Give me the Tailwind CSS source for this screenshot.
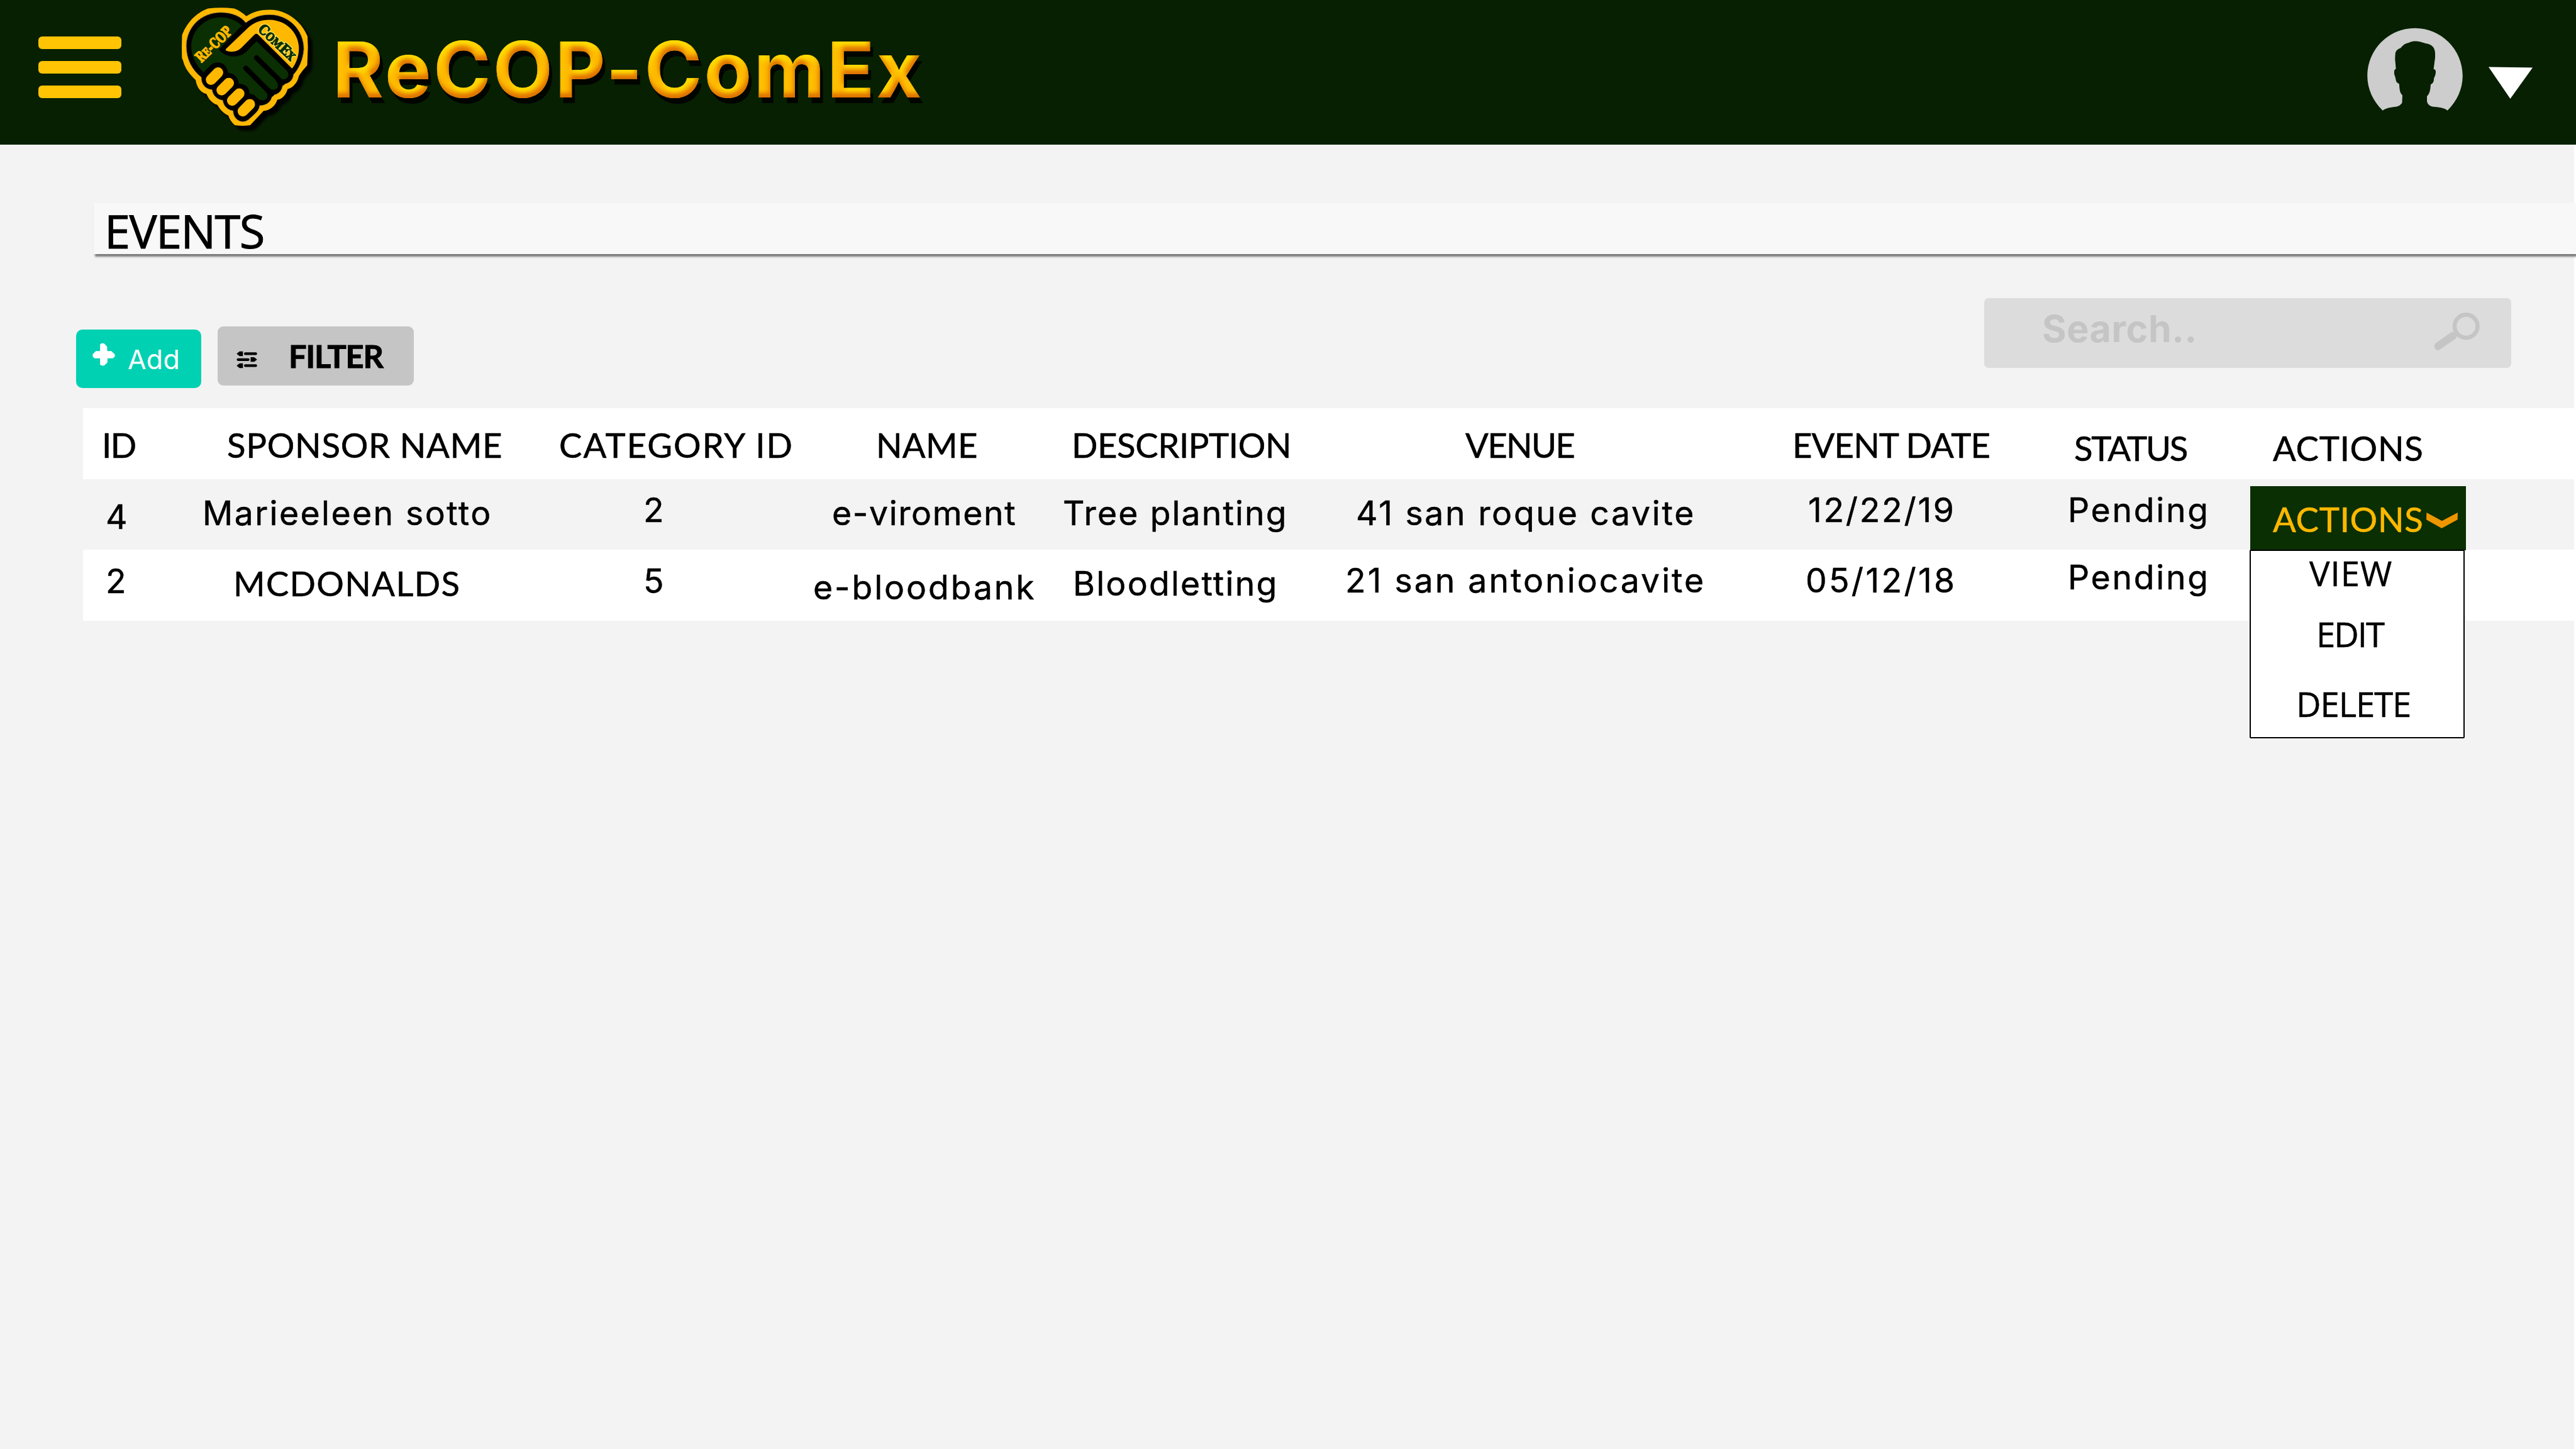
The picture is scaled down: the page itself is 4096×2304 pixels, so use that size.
<!DOCTYPE html>
<html lang="en">
<head>
<meta charset="utf-8">
<title>ReCOP-ComEx – Events</title>
<script src="https://cdn.jsdelivr.net/npm/@tailwindcss/browser@4"></script>
</head>
<body class="w-[4096px] h-[2304px] overflow-hidden bg-[#f3f3f3] text-black whitespace-nowrap">

<!-- bevel and hard shadow for the brand name -->
<svg class="absolute w-0 h-0" aria-hidden="true">
  <filter id="bevel" x="-5%" y="-20%" width="110%" height="150%" color-interpolation-filters="sRGB">
    <feComponentTransfer in="SourceAlpha" result="inv"><feFuncA type="linear" slope="-1" intercept="1"/></feComponentTransfer>
    <feGaussianBlur in="inv" stdDeviation="3.5" result="soft"/>
    <feOffset in="soft" dx="2" dy="8" result="hiOff"/>
    <feFlood flood-color="#ffdc00"/><feComposite in2="hiOff" operator="in"/><feComposite in2="SourceAlpha" operator="in" result="hi"/>
    <feOffset in="soft" dx="-2" dy="-7" result="loOff"/>
    <feFlood flood-color="#dd7000"/><feComposite in2="loOff" operator="in"/><feComposite in2="SourceAlpha" operator="in" result="lo"/>
    <feOffset in="SourceAlpha" dx="5" dy="9" result="shOff"/>
    <feFlood flood-color="#000500"/><feComposite in2="shOff" operator="in" result="sh"/>
    <feMerge><feMergeNode in="sh"/><feMergeNode in="SourceGraphic"/><feMergeNode in="hi"/><feMergeNode in="lo"/></feMerge>
  </filter>
</svg>

<header class="flex items-start h-[230px] w-full bg-[#072001]">
  <button class="flex flex-col gap-[19px] ml-[61px] mt-[58px] w-[132px]">
    <span class="h-5 rounded-md bg-[#ffc404]"></span>
    <span class="h-5 rounded-md bg-[#ffc404]"></span>
    <span class="h-5 rounded-md bg-[#ffc404]"></span>
  </button>

  <svg class="ml-[63px] w-[256px] h-[218px]" viewBox="0 0 1200 1020">
    <defs><filter id="ds" x="-10%" y="-10%" width="130%" height="130%"><feGaussianBlur stdDeviation="10"/></filter></defs>
    <path id="rim" transform="translate(34 36)" filter="url(#ds)" fill="#000" d="M350 62L545 62C580 75 610 95 636 120C690 85 745 72 810 72C850 72 890 80 925 96C1000 130 1060 190 1092 270L1095 350L1090 485C1070 510 1040 540 1027 568C1020 610 985 655 943 663C935 700 905 738 867 742C855 785 815 822 765 825L665 932Q610 942 550 932Q515 900 502 860C465 845 435 810 420 781C380 770 350 730 340 700C300 690 268 655 258 595C210 550 175 500 166 455L156 430L155 350L157 262C190 170 260 95 350 62Z"/>
    <path fill="#ffb800" d="M350 62Q450 52 545 62C580 75 610 95 636 120C690 85 745 72 810 72C850 72 890 80 925 96C1000 130 1060 190 1092 270L1095 350L1090 485C1070 510 1040 540 1027 568C1020 610 985 655 943 663C935 700 905 738 867 742C855 785 815 822 765 825L665 932Q610 942 550 932Q515 900 502 860C465 845 435 810 420 781C380 770 350 730 340 700C300 690 268 655 258 595C210 550 175 500 166 455L156 430L155 350L157 262C190 170 260 95 350 62Z"/>
    <path fill="#000" stroke="#a8883c" stroke-width="4" d="M445 92C530 92 595 120 632 168C690 125 745 108 810 108C950 108 1065 220 1065 365C1060 440 1030 510 988 555C985 595 955 625 908 628C905 670 880 705 830 708C825 750 795 785 735 787C735 820 700 850 650 893Q610 920 570 893C545 870 538 850 537 825C500 822 465 790 460 747C420 742 385 710 380 668C335 665 298 630 300 575C230 520 188 440 188 340C190 200 300 92 445 92Z"/>
    <path fill="#0a2f02" d="M445 128C505 128 560 150 602 190L432 368C480 432 585 438 640 380L712 306L935 523C965 555 945 590 912 590C900 590 890 584 880 574L855 600C890 640 865 668 835 668C822 668 812 662 800 652L775 676C810 710 790 747 757 747C735 747 720 735 700 712Q685 700 660 697C660 660 640 625 580 622C578 580 545 545 500 543C495 500 470 465 425 465C395 465 380 475 370 485L317 538C260 490 225 410 225 345C228 220 330 128 445 128Z"/>
    <path stroke="#000" stroke-width="38" stroke-linecap="round" d="M712 430L905 618M633 508L825 700"/>
    <path fill="#ffb800" d="M483 365L640 215C690 165 745 147 810 147C940 150 1028 250 1028 360C1028 420 1005 475 977 510L722 256Q710 246 696 258L605 350C570 390 515 390 483 375Z"/>
    <path stroke="#ffb800" stroke-width="78" stroke-linecap="round" d="M373 593L425 540M452 671L505 618M531 749L583 697M610 828L662 776"/>
    <text transform="translate(300 470) rotate(-44)" textLength="330" lengthAdjust="spacingAndGlyphs" class="font-['DejaVu_Serif',serif] font-bold text-[108px]" fill="#ffb800" stroke="#ffb800" stroke-width="7">R<tspan class="text-[86px]">E</tspan>-COP</text>
    <text transform="translate(716 224) rotate(43)" textLength="342" lengthAdjust="spacingAndGlyphs" class="font-['DejaVu_Serif',serif] font-bold text-[104px]" fill="none" stroke="#ffdf50" stroke-width="20">C<tspan class="text-[82px]">OM</tspan>E<tspan class="text-[82px]">X</tspan></text>
    <text transform="translate(716 224) rotate(43)" textLength="342" lengthAdjust="spacingAndGlyphs" class="font-['DejaVu_Serif',serif] font-bold text-[104px]" fill="#0a2f02" stroke="#0a2f02" stroke-width="6">C<tspan class="text-[82px]">OM</tspan>E<tspan class="text-[82px]">X</tspan></text>
  </svg>

  <h1 class="ml-[17px] mt-[36px] font-['Inter',sans-serif] font-bold text-[123px] leading-[150px] tracking-[3.84px] text-[#ffbb00] [filter:url(#bevel)]">ReCOP-ComEx</h1>

  <!-- avatar and account menu -->
  <svg class="ml-auto w-[152px] h-[153px] mt-[44px]" viewBox="209 208 622 717" preserveAspectRatio="none">
    <path fill="#cdcdcd" d="M310 825C247 757 210 665 210 567C210 371 349 211 520 211C691 211 830 371 830 567C830 665 793 757 731 825C712 808 690 804 662 800L632 796C610 788 600 772 598 756V718C612 704 620 680 622 632C640 620 643 606 643 585C652 566 655 552 655 535Q654 517 641 517L651 430V400C650 350 625 330 588 325C556 314 545 309 520 309C492 309 488 320 462 326C440 336 436 350 425 360C402 370 394 384 392 402L390 440L396 515C384 520 384 532 385 555C396 585 394 604 402 616L417 628C420 670 420 692 438 712L436 768C428 782 415 794 396 797C362 801 332 806 310 825Z"/>
  </svg>
  <svg class="ml-[41px] mt-[106px] mr-[69px] w-[70px] h-[51px]" viewBox="0 0 70 51"><path fill="#fff" d="M0 .5L70 1.5L34.5 51Z"/></svg>
</header>

<main class="h-[2074px] pt-[93px] border-r-[3px] border-white">
  <h2 class="ml-[149px] -mr-[3px] h-[81px] pl-[17px] pt-[3px] bg-[#f8f8f8] shadow-[2px_4px_3px_#777] font-['Open_Sans',sans-serif] text-[74px] leading-[82px] tracking-[-1.63px] [-webkit-text-stroke:1px_black]">EVENTS</h2>

  <div class="flex items-start h-[245px]">
    <button class="flex items-start ml-[121px] mt-[120px] w-[199px] h-[93px] rounded-[10px] bg-[#00d1b2] text-white">
      <svg class="ml-[26px] mt-[21px] w-[36px] h-[37px]" viewBox="146 160 172 172" preserveAspectRatio="none"><path fill="#fff" d="M204 172Q218 158 238 168L258 190V222H290L316 246V262L300 275H260V305L238 326Q220 334 204 322V275H162L148 262V245L172 222H204Z"/></svg>
      <span class="ml-[20px] mt-[22px] font-['Inter',sans-serif] text-[43px] leading-[50px] tracking-[0.2px]">Add</span>
    </button>
    <button class="flex items-start ml-[26px] mt-[115px] w-[312px] h-[94px] rounded-[9px] bg-[#c5c5c5]">
      <svg class="ml-[30px] mt-[39px] w-[33px] h-[28px]" viewBox="1224 216 157 134" preserveAspectRatio="none">
        <path fill="#000" d="M1225 237L1247 219H1273V255H1247ZM1225 328L1247 310H1273V347H1247ZM1380 282L1358 299H1331V264H1358Z"/>
        <path stroke="#000" stroke-width="20" stroke-linecap="round" d="M1291 237H1370M1236 282H1313M1291 328H1370"/>
      </svg>
      <span class="ml-[50px] mt-[17px] font-['Lato',sans-serif] font-bold text-[50.5px] leading-[60px] tracking-[-1.24px] [-webkit-text-stroke:1px_black]">FILTER</span>
    </button>
    <div class="flex items-start ml-auto mr-[100px] mt-[70px] w-[838px] h-[111px] rounded-[7px] bg-[#dcdcdc] text-[#c5c5c5]">
      <span class="ml-[92px] mt-[14px] font-['Inter',sans-serif] font-bold text-[59px] leading-[70px] tracking-[0.6px]">Search..</span>
      <svg class="ml-auto mr-[50px] mt-[23px] w-[73px] h-[61px]" viewBox="3873 497 73 61">
        <circle cx="3924.2" cy="518.7" r="18.3" fill="none" stroke="#c5c5c5" stroke-width="6.6"/>
        <path fill="#c5c5c5" d="M3900.5 528.2Q3902 527.4 3905 528L3910 533Q3909.500 537 3907 539L3883 555.500Q3879 558.500 3876 555.500Q3871.500 551 3875.500 546Z"/>
      </svg>
    </div>
  </div>

  <!-- events table -->
  <div class="ml-[132px] -mr-[3px]">
    <div class="grid grid-cols-[168px_560px_415px_405px_440px_680px_440px_320px_1fr] h-[113px] bg-white font-['Lato',sans-serif] text-[54.5px] leading-[60px] [-webkit-text-stroke:0.6px_black]">
      <div class="pt-[28px] pl-[30px] tracking-[-1.46px]">ID</div>
      <div class="pt-[28px] pl-[61px] tracking-[0.73px]">SPONSOR NAME</div>
      <div class="pt-[28px] pl-[29px] tracking-[2px]">CATEGORY ID</div>
      <div class="pt-[28px] pl-[118px] tracking-[0.26px]">NAME</div>
      <div class="pt-[28px] pl-[24px] tracking-[-0.42px]">DESCRIPTION</div>
      <div class="pt-[28px] pl-[210px] tracking-[-1.7px]">VENUE</div>
      <div class="pt-[28px] pl-[50px] tracking-[-0.9px]">EVENT DATE</div>
      <div class="pt-[33px] pl-[58px] tracking-[-2.3px]">STATUS</div>
      <div class="pt-[33px] pl-[54px] tracking-[0.72px]">ACTIONS</div>
    </div>

    <div class="grid grid-cols-[168px_560px_415px_405px_440px_680px_440px_320px_1fr] h-[112px] font-['Inter',sans-serif] text-[53.5px] leading-[60px] [-webkit-text-stroke:0.5px_black]">
      <div class="pt-[30px] pl-[36px]">4</div>
      <div class="pt-[24px] pl-[22px] tracking-[2.4px]">Marieeleen sotto</div>
      <div class="pt-[19px] pl-[163px]">2</div>
      <div class="pt-[24px] pl-[48px] tracking-[1.6px]">e-viroment</div>
      <div class="pt-[24px] pl-[10px] tracking-[2.1px]">Tree planting</div>
      <div class="pt-[24px] pl-[36px] tracking-[2.7px]">41 san roque cavite</div>
      <div class="pt-[19px] pl-[75px] tracking-[2.7px]">12/22/19</div>
      <div class="pt-[19px] pl-[48px] tracking-[2.7px]">Pending</div>
      <div class="pt-[11px] pl-[18px]">
        <div class="relative z-10 w-[343px] h-[102px]">
          <button class="flex items-start w-full h-full pl-[36px] pt-[22px] bg-[#0a2f02] text-[#ffb800] font-['Lato',sans-serif] text-[54.5px] leading-[60px] tracking-[0.72px] [-webkit-text-stroke:0.6px_#ffb800]">
            ACTIONS
            <svg class="ml-auto mr-[13px] mt-[20px] w-[50px] h-[25px]" viewBox="0 0 135 66" preserveAspectRatio="none"><path fill="#ee9500" d="M1 0L67 35L135 0L134 30L66 66L0 30Z"/></svg>
          </button>
          <div class="absolute top-[101px] left-[-1px] w-[342px] h-[300px] pt-[5px] border-2 border-black rounded-[2px] bg-white font-['Open_Sans',sans-serif] text-[54.5px] leading-[60px]">
            <div class="pl-[93px] tracking-[1px]">VIEW</div>
            <div class="mt-[37px] pl-[104px] tracking-[-2.02px]">EDIT</div>
            <div class="mt-[51px] pl-[72px] tracking-[-1.1px]">DELETE</div>
          </div>
        </div>
      </div>
    </div>

    <div class="grid grid-cols-[168px_560px_415px_405px_440px_680px_440px_320px_1fr] h-[113px] bg-white font-['Inter',sans-serif] text-[53.5px] leading-[60px] [-webkit-text-stroke:0.5px_black]">
      <div class="pt-[20px] pl-[36px]">2</div>
      <div class="pt-[23px] pl-[71px] font-['Lato',sans-serif] text-[54.5px] leading-[60px] tracking-[1.3px]">MCDONALDS</div>
      <div class="pt-[20px] pl-[163px]">5</div>
      <div class="pt-[30px] pl-[18px] tracking-[2.9px]">e-bloodbank</div>
      <div class="pt-[24px] pl-[26px] tracking-[2.2px]">Bloodletting</div>
      <div class="pt-[19px] pl-[19px] tracking-[3px]">21 san antoniocavite</div>
      <div class="pt-[19px] pl-[71px] tracking-[3.3px]">05/12/18</div>
      <div class="pt-[14px] pl-[48px] tracking-[2.7px]">Pending</div>
      <div></div>
    </div>
  </div>
</main>
</body>
</html>
